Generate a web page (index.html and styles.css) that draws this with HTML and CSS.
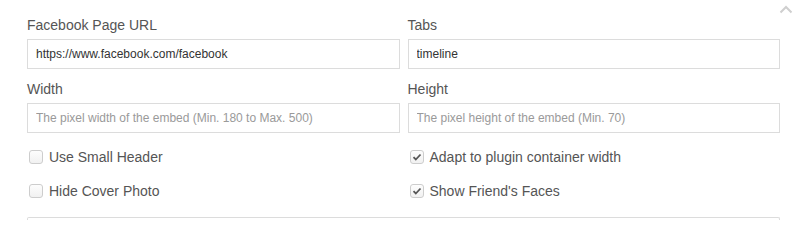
FILE: index.html
```html
<!DOCTYPE html>
<html lang="en">
<head>
<meta charset="utf-8">
<title>Facebook Page embed settings</title>
<link rel="stylesheet" href="styles.css">
</head>
<body>
<div class="panel">
  <button class="collapse" type="button" aria-label="Collapse">
    <svg width="14" height="9" viewBox="0 0 14 9"><polyline points="1.5,7.5 7,2 12.5,7.5" fill="none" stroke="#cfcfcf" stroke-width="2"/></svg>
  </button>
  <div class="grid">
    <div class="field">
      <label class="label">Facebook Page URL</label>
      <input class="input" type="text" value="https://www.facebook.com/facebook">
    </div>
    <div class="field">
      <label class="label">Tabs</label>
      <input class="input" type="text" value="timeline">
    </div>
    <div class="field">
      <label class="label">Width</label>
      <input class="input" type="text" placeholder="The pixel width of the embed (Min. 180 to Max. 500)">
    </div>
    <div class="field">
      <label class="label">Height</label>
      <input class="input" type="text" placeholder="The pixel height of the embed (Min. 70)">
    </div>
    <label class="check">
      <span class="box"></span>
      <span class="check-text">Use Small Header</span>
    </label>
    <label class="check">
      <span class="box checked"><svg width="12" height="12" viewBox="0 0 12 12"><polyline points="2.5,6.2 4.8,8.5 9.5,3.5" fill="none" stroke="#555" stroke-width="1.8"/></svg></span>
      <span class="check-text">Adapt to plugin container width</span>
    </label>
    <label class="check">
      <span class="box"></span>
      <span class="check-text">Hide Cover Photo</span>
    </label>
    <label class="check">
      <span class="box checked"><svg width="12" height="12" viewBox="0 0 12 12"><polyline points="2.5,6.2 4.8,8.5 9.5,3.5" fill="none" stroke="#555" stroke-width="1.8"/></svg></span>
      <span class="check-text">Show Friend's Faces</span>
    </label>
  </div>
  <div class="next-box"></div>
</div>
</body>
</html>
```
FILE: styles.css
```css
html, body {
  margin: 0;
  padding: 0;
  background: #fff;
}

body {
  font-family: "Liberation Sans", Arial, sans-serif;
  color: #555;
}

.panel {
  position: relative;
  padding: 15px 24px 0 27px;
}

.collapse {
  position: absolute;
  top: 5px;
  right: 11px;
  width: 14px;
  height: 9px;
  padding: 0;
  border: 0;
  background: none;
  display: flex;
}

.grid {
  display: grid;
  grid-template-columns: 1fr 1fr;
  column-gap: 8px;
  row-gap: 10px;
}

.field {
  display: flex;
  flex-direction: column;
}

.label {
  font-size: 14px;
  line-height: 20px;
  color: #555;
  margin-bottom: 4px;
}

.input {
  box-sizing: border-box;
  height: 30px;
  width: 100%;
  margin: 0;
  padding: 0 8px;
  border: 1px solid #dcdcdc;
  border-radius: 0;
  font-family: "Liberation Sans", Arial, sans-serif;
  font-size: 12px;
  color: #333;
  background: #fff;
  outline: none;
}

.input::placeholder {
  color: #9a9a9a;
}

.check {
  display: flex;
  align-items: center;
  height: 20px;
  margin-top: 4px;
  font-size: 14px;
  line-height: 20px;
  color: #555;
}

.box {
  box-sizing: border-box;
  width: 14px;
  height: 14px;
  margin: 0 6px 0 2px;
  border: 1px solid #cdcdcd;
  border-radius: 3px;
  background: linear-gradient(#fdfdfd, #f1f1f1);
  display: flex;
  align-items: center;
  justify-content: center;
}

.next-box {
  margin-top: 16px;
  height: 2px;
  border: 1px solid #dcdcdc;
  border-bottom: 0;
  border-radius: 2px 2px 0 0;
}
```
